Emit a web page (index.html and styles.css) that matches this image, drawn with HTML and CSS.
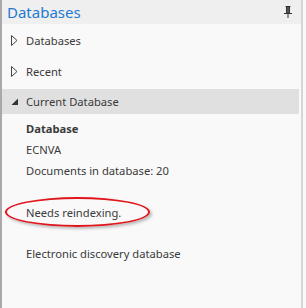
FILE: index.html
```html
<!DOCTYPE html>
<html>
<head>
<meta charset="utf-8">
<link rel="stylesheet" href="styles.css">
</head>
<body>
<div class="pane">
  <div class="header">
    <span class="title">Databases</span>
    <svg class="pin" width="8" height="12" viewBox="0 0 8 12">
      <path d="M1.5 0.5h5M2.5 0.5v7M5.5 0.5v7M0 7.5h8M4 8v4" stroke="#333" stroke-width="1" fill="none"/>
      <rect x="3" y="1" width="2" height="6" fill="#555"/>
    </svg>
  </div>
  <div class="body">
    <div class="row">
      <svg class="tri" width="7" height="11" viewBox="0 0 7 11"><path d="M0.5 0.5L6 5.5L0.5 10.5Z" fill="none" stroke="#444" stroke-width="1"/></svg>
      <span>Databases</span>
    </div>
    <div class="row">
      <svg class="tri" width="7" height="11" viewBox="0 0 7 11"><path d="M0.5 0.5L6 5.5L0.5 10.5Z" fill="none" stroke="#444" stroke-width="1"/></svg>
      <span>Recent</span>
    </div>
    <div class="row active">
      <svg class="tri" width="7" height="11" viewBox="0 0 7 11"><path d="M7 2.5V9H0.5Z" fill="#333"/></svg>
      <span>Current Database</span>
    </div>
    <div class="details">
      <div class="line bold">Database</div>
      <div class="line">ECNVA</div>
      <div class="line">Documents in database: 20</div>
      <div class="line status"><span class="ring"></span>Needs reindexing.</div>
      <div class="line desc">Electronic discovery database</div>
    </div>
  </div>
</div>
</body>
</html>
```
FILE: styles.css
```css
html, body {
  margin: 0;
  padding: 0;
  background: #f9f9f9;
}
body {
  font-family: "Noto Sans", "Open Sans", sans-serif;
  font-size: 11.2px;
  color: #3a3a3a;
}
.pane {
  width: 303px;
  height: 308px;
  box-sizing: border-box;
  border-left: 2px solid #a9a9a9;
  border-right: 2px solid #d6d6d6;
  background: #f9f9f9;
  display: flex;
  flex-direction: column;
}
.header {
  height: 24px;
  background: #efefef;
  display: flex;
  align-items: center;
  justify-content: space-between;
  padding: 0 9px 0 5px;
}
.title {
  color: #1e79d2;
  font-size: 15px;
  line-height: 24px;
}
.pin {
  display: block;
}
.body {
  padding-top: 3px;
  display: flex;
  flex-direction: column;
}
.row {
  height: 27px;
  display: flex;
  align-items: center;
  padding-left: 9px;
  gap: 8px;
  margin-right: 2px;
}
.row + .row {
  margin-top: 4px;
}
.row.active {
  background: #e0e0e0;
  height: 25px;
}
.tri {
  display: block;
}
.details {
  padding: 4px 0 0 24px;
  display: flex;
  flex-direction: column;
}
.line {
  height: 21px;
  line-height: 21px;
}
.bold {
  font-weight: bold;
}
.status {
  position: relative;
  margin-top: 21px;
}
.ring {
  position: absolute;
  box-sizing: border-box;
  left: -21px;
  top: -5px;
  width: 145px;
  height: 30px;
  border: 2px solid #e0161c;
  border-radius: 50%;
  box-shadow: 2px 2px 3px rgba(0,0,0,0.25);
}
.desc {
  margin-top: 20px;
}
```
